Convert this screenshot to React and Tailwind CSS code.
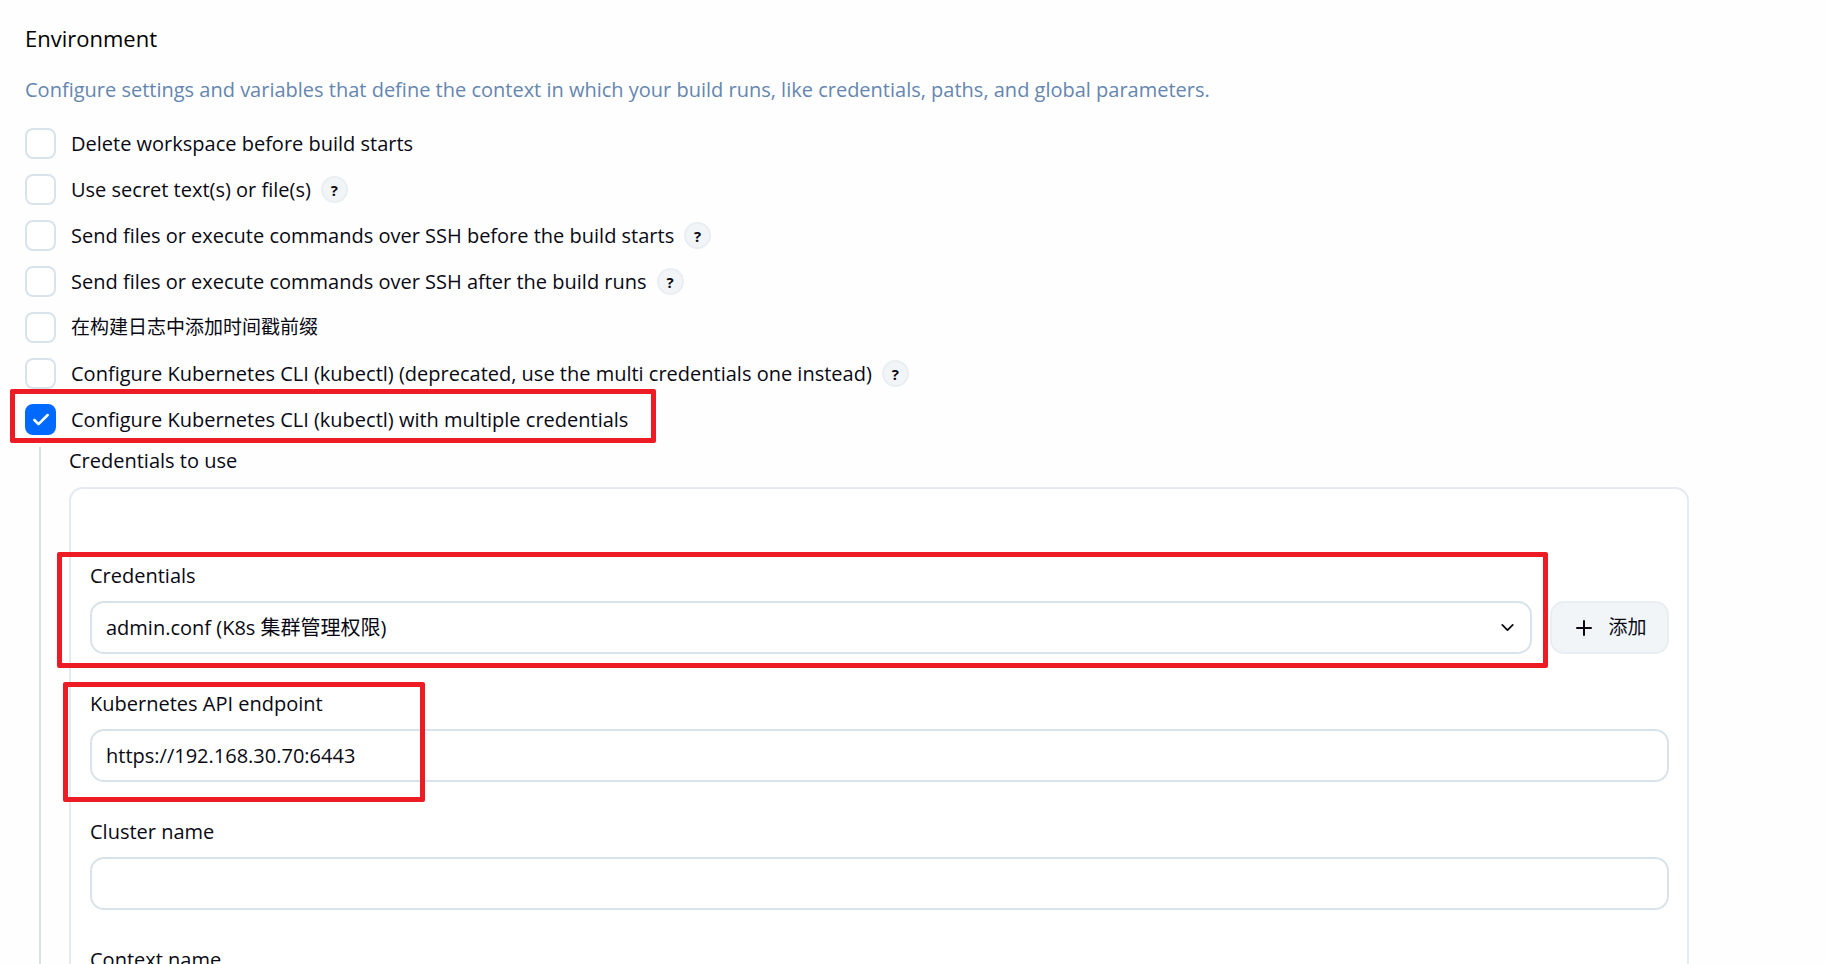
import React from 'react';
import { Check, ChevronDown, Plus } from 'lucide-react';

const options = [
  { id: 'delete-workspace', label: 'Delete workspace before build starts' },
  { id: 'secret-text', label: 'Use secret text(s) or file(s)', help: true },
  { id: 'ssh-before', label: 'Send files or execute commands over SSH before the build starts', help: true },
  { id: 'ssh-after', label: 'Send files or execute commands over SSH after the build runs', help: true },
  { id: 'timestamps', label: '在构建日志中添加时间戳前缀', chinese: true },
  { id: 'kubectl', label: 'Configure Kubernetes CLI (kubectl) (deprecated, use the multi credentials one instead)', help: true },
  { id: 'kubectl-multi', label: 'Configure Kubernetes CLI (kubectl) with multiple credentials', checked: true, marked: true }
];

function Option({ id, label, help, checked, marked, chinese }) {
  return (
    <div className="relative flex items-center self-start">
      <span className="relative flex">
        <input
          id={id}
          type="checkbox"
          defaultChecked={checked}
          className="peer h-[31px] w-[31px] appearance-none rounded-lg border-2 border-[#d9e3ec] bg-white checked:border-[#006aff] checked:bg-[#006aff]"
        />
        <Check
          size={20}
          strokeWidth={3}
          className="pointer-events-none absolute inset-0 m-auto hidden text-white peer-checked:block"
        />
      </span>
      <label
        htmlFor={id}
        className={`pl-[15px] leading-[31px] whitespace-nowrap ${chinese ? 'text-[19px]' : ''}`}
      >
        {label}
      </label>
      {help && (
        <button
          type="button"
          aria-label={`Help for feature: ${label}`}
          className="ml-2.5 h-[27px] w-[27px] rounded-full border-2 border-[#e9eef3] bg-[#f1f5f8] text-[15px] leading-[22px] font-bold"
        >
          ?
        </button>
      )}
      {marked && <Marker className="-top-[15px] -right-7 -bottom-2 -left-[15px]" />}
    </div>
  );
}

// Red highlight frame laid over a control
function Marker({ className }) {
  return <div className={`pointer-events-none absolute z-10 rounded-xs border-5 border-[#ed1c24] ${className}`} />;
}

function Field({ id, label, children }) {
  return (
    <div className="relative flex flex-col gap-[11px]">
      <label htmlFor={id} className="leading-7">{label}</label>
      {children}
    </div>
  );
}

function TextInput({ id, value = '' }) {
  return (
    <input
      id={id}
      type="text"
      defaultValue={value}
      className="h-[53px] w-full rounded-[14px] border-2 border-[#d9e3ec] bg-white px-[14px]"
    />
  );
}

export default function App() {
  return (
    <main className="h-screen overflow-hidden bg-[#fefefe] pt-[22px] pr-[137px] pl-[25px] font-['Open_Sans','Noto_Sans_CJK_SC',sans-serif] text-[20px] text-[#090914]">
      <h2 className="text-[22px] leading-8 text-black">Environment</h2>
      <p className="mt-5 leading-8 text-[#6586b0]">
        Configure settings and variables that define the context in which your build runs, like credentials, paths, and global parameters.
      </p>

      <div className="mt-[22px] flex flex-col gap-[15px]">
        {options.map((option) => (
          <Option key={option.id} {...option} />
        ))}
      </div>

      {/* Settings of the ticked option */}
      <div className="mt-3 ml-[14px] border-l-2 border-[#d9e3ec] pl-7">
        <div className="leading-7">Credentials to use</div>
        <div className="mt-3 flex flex-col gap-9 rounded-[14px] border-2 border-[#e4e9f2] bg-white pt-[73px] pr-[18px] pb-10 pl-[19px]">
          <div className="flex items-end gap-[18px]">
            <div className="min-w-0 flex-1">
              <Field id="credentials" label="Credentials">
                <div className="relative">
                  <select
                    id="credentials"
                    className="h-[53px] w-full appearance-none rounded-[14px] border-2 border-[#d9e3ec] bg-white px-[14px]"
                  >
                    <option>admin.conf (K8s 集群管理权限)</option>
                  </select>
                  <ChevronDown size={21} className="pointer-events-none absolute inset-y-0 right-[14px] my-auto" />
                </div>
                <Marker className="-top-2.5 -right-4 -bottom-3.5 -left-[33px]" />
              </Field>
            </div>
            <button
              type="button"
              className="flex h-[53px] w-[119px] items-center justify-center gap-3 rounded-[14px] border-2 border-[#e9eef3] bg-[#f1f5f8] text-[19px]"
            >
              <Plus size={24} strokeWidth={2} />
              添加
            </button>
          </div>

          <div className="relative">
            <Field id="endpoint" label="Kubernetes API endpoint">
              <TextInput id="endpoint" value="https://192.168.30.70:6443" />
            </Field>
            <Marker className="-top-2 -bottom-5 -left-[27px] w-[362px]" />
          </div>

          <Field id="cluster" label="Cluster name">
            <TextInput id="cluster" />
          </Field>

          <Field id="context" label="Context name">
            <TextInput id="context" />
          </Field>
        </div>
      </div>
    </main>
  );
}
